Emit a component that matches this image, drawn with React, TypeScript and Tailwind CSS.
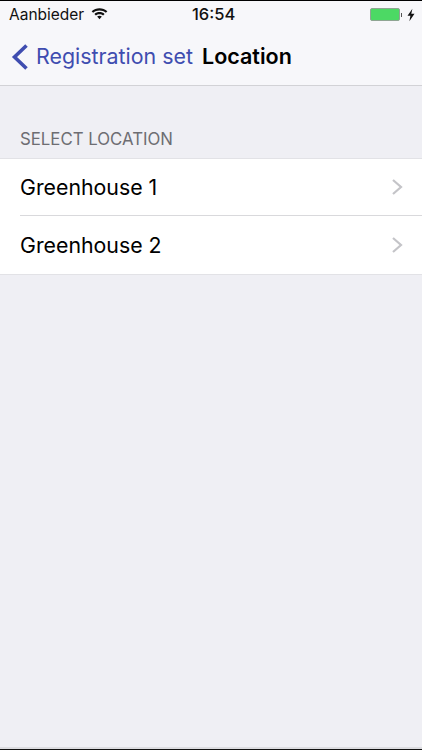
const FONT = "font-['Inter','Liberation_Sans',sans-serif]";

function Wifi() {
  return (
    <svg width="17" height="13" viewBox="0 0 16 12" className="ml-[7px] mb-[2px]">
      <path d="M0.6 3.9C4.6 0 11.4 0 15.4 3.9L14 5.4C10.7 2.4 5.3 2.4 2 5.4Z" fill="#111" />
      <path d="M3.2 6.4C5.9 3.9 10.1 3.9 12.8 6.4L11.4 7.9C9.5 6.2 6.5 6.2 4.6 7.9Z" fill="#111" />
      <path d="M5.8 8.9C7.1 7.9 8.9 7.9 10.2 8.9L8 11.4Z" fill="#111" />
    </svg>
  );
}

function Battery() {
  return (
    <div className="flex items-center">
      <div className="w-[30px] h-[13px] rounded-[2px] bg-[#4cd964] border border-[#8fa593]" />
      <div className="w-[1.5px] h-[4px] bg-[#555] ml-[1px]" />
      <svg width="8" height="14" viewBox="0 0 8 13" className="ml-[5px]">
        <path d="M5.4 0.3L0.5 7.3H3.4L2.4 12.7L7.5 5.3H4.3Z" fill="#111" />
      </svg>
    </div>
  );
}

function Row({ label, divider }: { label: string; divider?: boolean }) {
  return (
    <div className="pl-5">
      <div
        className={`flex items-center justify-between pr-[19px] ${
          divider ? 'h-[57px] border-b border-[#d9d9dc]' : 'h-[58px]'
        }`}
      >
        <span className="text-[21.3px] text-black pt-[2px]">{label}</span>
        <svg width="12" height="18" viewBox="0 0 12 18">
          <path d="M2 2L10 9L2 16" fill="none" stroke="#c4c4c8" strokeWidth="2.2" />
        </svg>
      </div>
    </div>
  );
}

export default function App() {
  return (
    <div className={`${FONT} w-[422px] h-[750px] flex flex-col bg-[#efeff4] overflow-hidden`}>
      {/* Header */}
      <div className="h-[86px] shrink-0 bg-[#f7f7fa] border-b border-[#d2d2d6] border-t border-t-black">
        <div className="h-[27px] flex items-center justify-between pl-[9px] pr-[7px] relative">
          <div className="flex items-center text-[15.5px] text-[#111]">
            Aanbieder
            <Wifi />
          </div>
          <span className="absolute left-[192px] text-[16.5px] font-medium text-[#111]">16:54</span>
          <Battery />
        </div>
        <div className="h-[57px] flex items-center pl-[11px]">
          <svg width="18" height="28" viewBox="0 0 18 28">
            <path d="M15.5 2.5L3.5 14L15.5 25.5" fill="none" stroke="#3f4db0" strokeWidth="3.6" />
          </svg>
          <span className="ml-[7px] text-[21.4px] text-[#3f4db0]">Registration set</span>
          <span className="ml-[9px] text-[21.5px] font-semibold text-black">Location</span>
        </div>
      </div>

      {/* Section */}
      <div className="h-[72px] shrink-0 flex items-end pl-5 pb-[6px]">
        <span className="text-[16.8px] text-[#6d6d72]">SELECT LOCATION</span>
      </div>
      <div className="bg-white border-y border-[#e2e2e6]">
        <Row label="Greenhouse 1" divider />
        <Row label="Greenhouse 2" />
      </div>

      <div className="flex-1" />
      <div className="h-[2px] bg-[#dcdce0]" />
      <div className="h-[1px] bg-[#111]" />
    </div>
  );
}
